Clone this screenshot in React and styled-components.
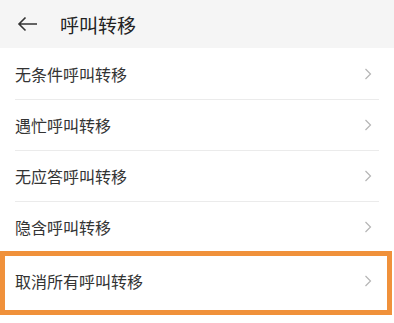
import React from 'react';
import styled, { createGlobalStyle } from 'styled-components';

const GlobalStyle = createGlobalStyle`
  body {
    margin: 0;
    background: #fff;
    font-family: "Noto Sans CJK SC", "Noto Sans", sans-serif;
  }
`

const Page = styled.div`
  width: 394px;
  height: 323px;
  overflow: hidden;
  background: #fff;
`

const Header = styled.div`
  display: flex;
  align-items: center;
  height: 48px;
  background: #f5f5f5;
  padding-left: 17px;
  box-sizing: border-box;
`

const Title = styled.h1`
  margin: 0 0 0 22px;
  font-size: 19px;
  font-weight: 400;
  color: #222;
  line-height: 1;
`

const List = styled.div`
  display: flex;
  flex-direction: column;
  padding-top: 1px;
`

const Row = styled.div`
  display: flex;
  align-items: center;
  justify-content: space-between;
  height: 51px;
  margin: 0 15px;
  box-sizing: border-box;
  border-bottom: 1px solid #ebebeb;
  ${p => p.highlight && `
    height: 64px;
    margin: -2px 2px 0 0;
    border: 5px solid #f0913b;
    padding: 0 15px 4px 10px;
  `}
`

const Label = styled.span`
  font-size: 16px;
  color: #333;
  line-height: 1;
`

const ChevronIcon = styled.svg`
  flex: none;
  margin-right: ${p => (p.inBox ? '0' : '7px')};
`

const Chevron = ({ inBox }) => (
  <ChevronIcon inBox={inBox} width="8" height="12" viewBox="0 0 8 12">
    <path d="M1.5 1 L6.5 6 L1.5 11" fill="none" stroke="#b5b5b5" strokeWidth="1.2" />
  </ChevronIcon>
)

const items = ['无条件呼叫转移', '遇忙呼叫转移', '无应答呼叫转移', '隐含呼叫转移']

export default () => (
  <>
    <GlobalStyle />
    <Page>
      <Header>
        <svg width="21" height="16" viewBox="0 0 21 16">
          <path d="M20 8 H2 M8.5 1.5 L2 8 L8.5 14.5" fill="none" stroke="#333" strokeWidth="1.6" />
        </svg>
        <Title>呼叫转移</Title>
      </Header>
      <List>
        {items.map(t => (
          <Row key={t}>
            <Label>{t}</Label>
            <Chevron />
          </Row>
        ))}
        <Row highlight>
          <Label>取消所有呼叫转移</Label>
          <Chevron inBox />
        </Row>
      </List>
    </Page>
  </>
)
